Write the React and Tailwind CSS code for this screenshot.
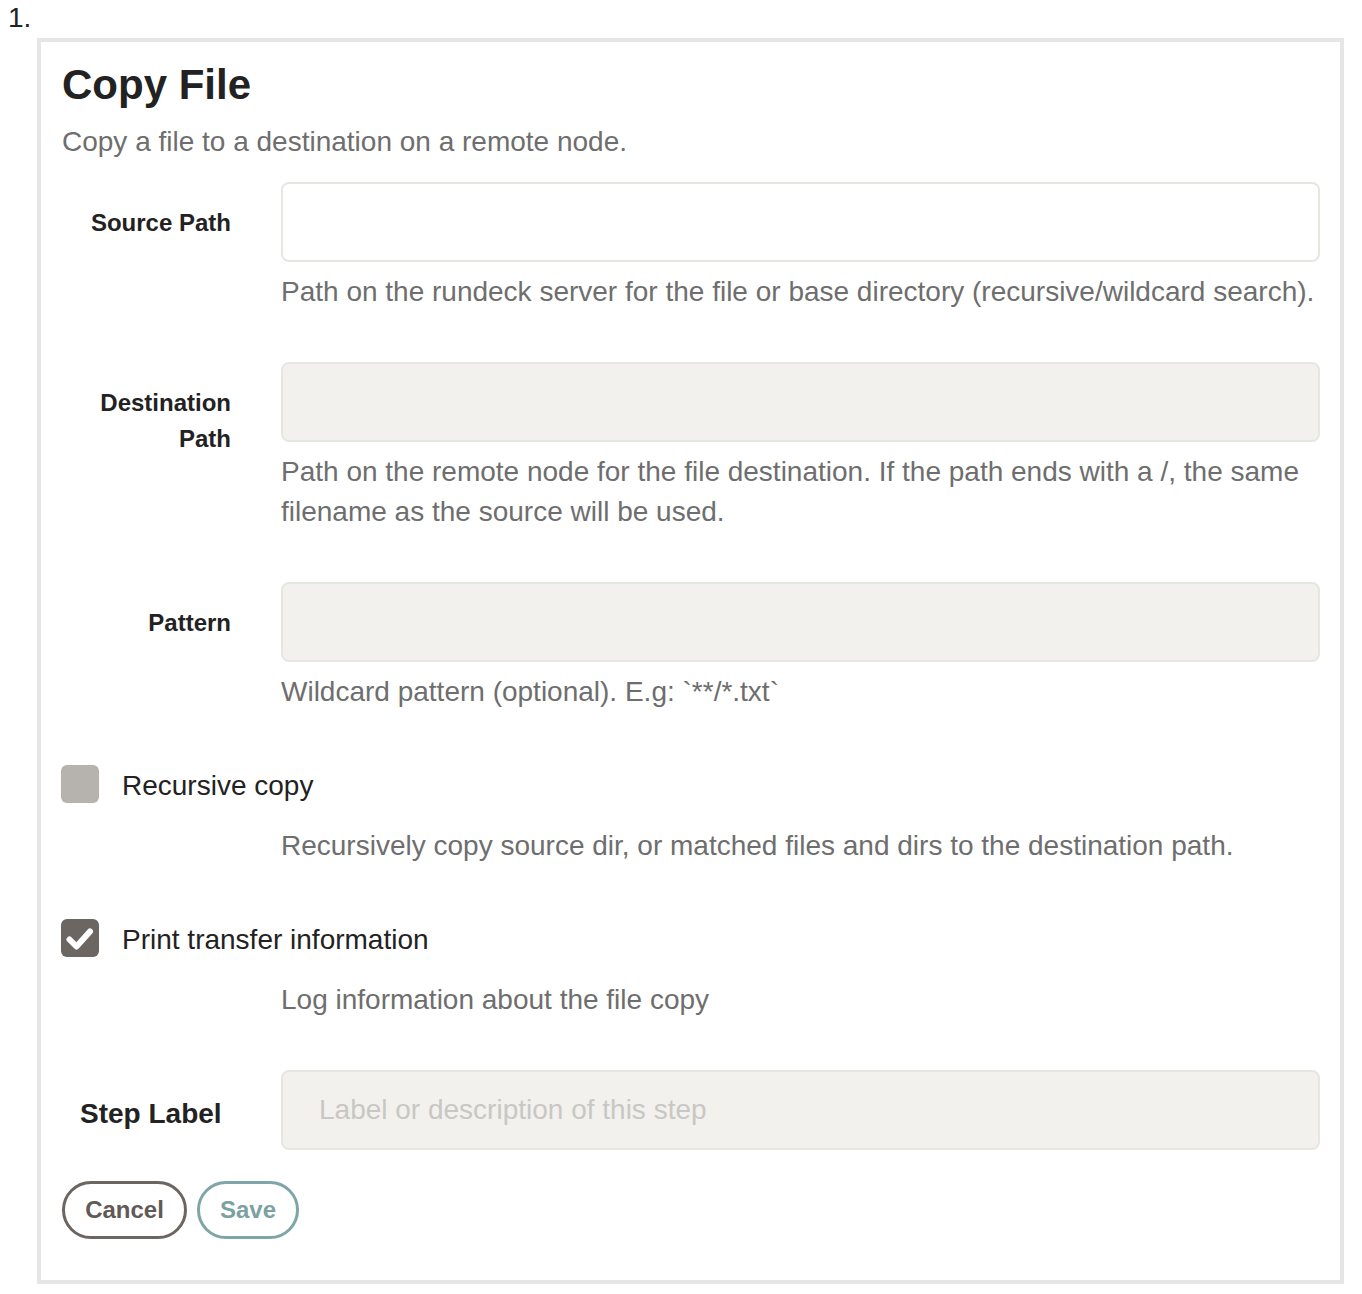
import { useState } from 'react'

const font = { fontFamily: '"Liberation Sans", Arial, sans-serif' }

function Field({ label, help, value, disabled }) {
  return (
    <div className="flex">
      <label className="w-[169px] shrink-0 pt-[23px] text-right text-[24px] leading-[36px] font-bold text-[#222]">
        {label}
      </label>
      <div className="ml-[50px] flex-1">
        <input
          type="text"
          defaultValue={value}
          className={`block h-[80px] w-full rounded-[8px] border-2 border-[#e8e6e1] px-[36px] text-[28px] outline-none ${disabled ? 'bg-[#f2f1ee]' : 'bg-white'}`}
        />
        <p className="mt-[10px] text-[28px] leading-[40px] text-[#6e6e6e]">{help}</p>
      </div>
    </div>
  )
}

function Checkbox({ checked, onToggle, label, help }) {
  return (
    <div>
      <label className="flex items-start cursor-pointer" onClick={onToggle}>
        <span
          className={`mt-[1px] -ml-[1px] flex h-[38px] w-[38px] shrink-0 items-center justify-center rounded-[6px] ${checked ? 'bg-[#6b6661]' : 'bg-[#b6b2ae]'}`}
        >
          {checked && (
            <svg width="38" height="38" viewBox="0 0 38 38">
              <path d="M8.5 20.5 L15.5 27.5 L29 12.5" fill="none" stroke="white" strokeWidth="6" strokeLinecap="round" strokeLinejoin="round" />
            </svg>
          )}
        </span>
        <span className="ml-[23px] pt-[2px] text-[28px] leading-[40px] text-[#222]">{label}</span>
      </label>
      <p className="ml-[219px] mt-[20px] text-[28px] leading-[40px] text-[#6e6e6e]">{help}</p>
    </div>
  )
}

export default function App() {
  const [recursive, setRecursive] = useState(false)
  const [printInfo, setPrintInfo] = useState(true)

  return (
    <div className="bg-white min-h-[1294px] pl-[8px]" style={font}>
      <div className="text-[28px] leading-[36px] text-[#222]">1.</div>
      <div className="ml-[29px] mt-[2px] w-[1307px] border-4 border-[#e6e6e6] pl-[21px] pr-[20px] pt-[20px] pb-[41px]">
        {/* Header */}
        <h3 className="text-[42px] leading-[46px] font-bold text-[#222]">Copy File</h3>
        <p className="mt-[14px] text-[28px] leading-[40px] text-[#6e6e6e]">Copy a file to a destination on a remote node.</p>

        <div className="mt-[20px] flex flex-col gap-[50px]">
          <Field
            label="Source Path"
            help="Path on the rundeck server for the file or base directory (recursive/wildcard search)."
          />
          <Field
            label={<>Destination<br />Path</>}
            disabled
            help="Path on the remote node for the file destination. If the path ends with a /, the same filename as the source will be used."
          />
          <Field label="Pattern" disabled help="Wildcard pattern (optional). E.g: `**/*.txt`" />
        </div>

        <div className="mt-[52px]">
          <Checkbox
            checked={recursive}
            onToggle={() => setRecursive(!recursive)}
            label="Recursive copy"
            help="Recursively copy source dir, or matched files and dirs to the destination path."
          />
        </div>
        <div className="mt-[52px]">
          <Checkbox
            checked={printInfo}
            onToggle={() => setPrintInfo(!printInfo)}
            label="Print transfer information"
            help="Log information about the file copy"
          />
        </div>

        {/* Step label */}
        <div className="mt-[50px] flex">
          <label className="w-[168px] shrink-0 pl-[18px] pt-[24px] text-[28px] leading-[40px] font-bold text-[#222]">
            Step Label
          </label>
          <input
            type="text"
            placeholder="Label or description of this step"
            className="ml-[51px] block h-[80px] flex-1 rounded-[8px] border-2 border-[#e8e6e1] bg-[#f2f1ee] px-[36px] text-[28px] outline-none placeholder:text-[#c9c7c3]"
          />
        </div>

        {/* Buttons */}
        <div className="mt-[31px] flex gap-[10px]">
          <button className="h-[58px] w-[125px] rounded-full border-[3px] border-[#6b6661] text-[24px] font-bold text-[#5f5a55]">
            Cancel
          </button>
          <button className="h-[58px] w-[102px] rounded-full border-[3px] border-[#7ea5a7] text-[24px] font-bold text-[#7ba1a3]">
            Save
          </button>
        </div>
      </div>
    </div>
  )
}
